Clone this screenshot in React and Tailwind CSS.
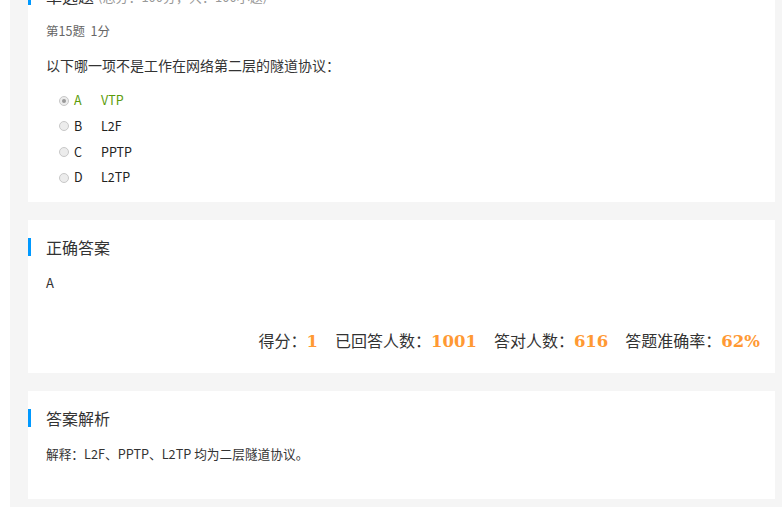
export default function App() {
  const font = { fontFamily: '"Noto Sans CJK SC", "Liberation Sans", sans-serif' };
  const num = { fontFamily: '"DejaVu Serif", serif' };
  const opts = [
    { k: "A", t: "VTP", sel: true },
    { k: "B", t: "L2F" },
    { k: "C", t: "PPTP" },
    { k: "D", t: "L2TP" },
  ];
  return (
    <div className="h-[507px] w-[782px] overflow-hidden bg-white pl-[10px]" style={font}>
      <div className="flex h-full flex-col overflow-hidden bg-[#f5f5f5] pl-[18px] pr-[7px]">
        <div className="-mt-[31px] flex flex-col gap-[18px]">
          {/* Card 1 */}
          <div className="h-[233px] bg-white pt-[18px]">
            <div className="flex h-[18px] items-center border-l-[3px] border-[#0099ff] pl-[15px]">
              <span className="text-[16px] leading-none text-[#333]">单选题</span>
              <span className="ml-1 text-[13px] leading-none text-[#999]">(总分：100分，共：100小题)</span>
            </div>
            <div className="mt-[16px] pl-[18px] text-[12.5px] leading-[20px] text-[#666]">第15题&nbsp;&nbsp;1分</div>
            <div className="mt-[14px] pl-[18px] text-[14px] leading-[20px] text-[#333]">以下哪一项不是工作在网络第二层的隧道协议：</div>
            <div className="mt-[13px] flex flex-col pl-[31px]">
              {opts.map((o) => (
                <div key={o.k} className="flex h-[25.6px] items-center text-[12.5px]">
                  <span className="flex h-[10px] w-[10px] items-center justify-center rounded-full border border-[#c8c8c8] bg-[#ececec]">
                    {o.sel && <span className="h-[4px] w-[4px] rounded-full bg-[#9a9a9a]" />}
                  </span>
                  <span className={`ml-[5px] w-[27px] ${o.sel ? "text-[#5b9c0a]" : "text-[#222]"}`}>{o.k}</span>
                  <span className={o.sel ? "text-[#5b9c0a]" : "text-[#222]"}>{o.t}</span>
                </div>
              ))}
            </div>
          </div>
          {/* Card 2 */}
          <div className="h-[153px] bg-white pt-[18px]">
            <div className="flex h-[18px] items-center border-l-[3px] border-[#0099ff] pl-[15px]">
              <span className="text-[16px] leading-none text-[#333]">正确答案</span>
            </div>
            <div className="mt-[17px] pl-[18px] text-[13px] leading-[20px] text-[#333]">A</div>
            <div className="mt-[35px] flex items-baseline justify-end pr-[15px] text-[16px] text-[#333]">
              <span>得分：</span>
              <span className="mr-[17px] text-[16.5px] font-bold text-[#ff9933]" style={num}>1</span>
              <span>已回答人数：</span>
              <span className="mr-[17px] text-[16.5px] font-bold text-[#ff9933]" style={num}>1001</span>
              <span>答对人数：</span>
              <span className="mr-[17px] text-[16.5px] font-bold text-[#ff9933]" style={num}>616</span>
              <span>答题准确率：</span>
              <span className="text-[16.5px] font-bold text-[#ff9933]" style={num}>62%</span>
            </div>
          </div>
          {/* Card 3 */}
          <div className="h-[108px] bg-white pt-[18px]">
            <div className="flex h-[18px] items-center border-l-[3px] border-[#0099ff] pl-[15px]">
              <span className="text-[16px] leading-none text-[#333]">答案解析</span>
            </div>
            <div className="mt-[17px] pl-[18px] text-[12.7px] leading-[20px] text-[#333]">解释：L2F、PPTP、L2TP 均为二层隧道协议。</div>
          </div>
        </div>
      </div>
    </div>
  );
}
